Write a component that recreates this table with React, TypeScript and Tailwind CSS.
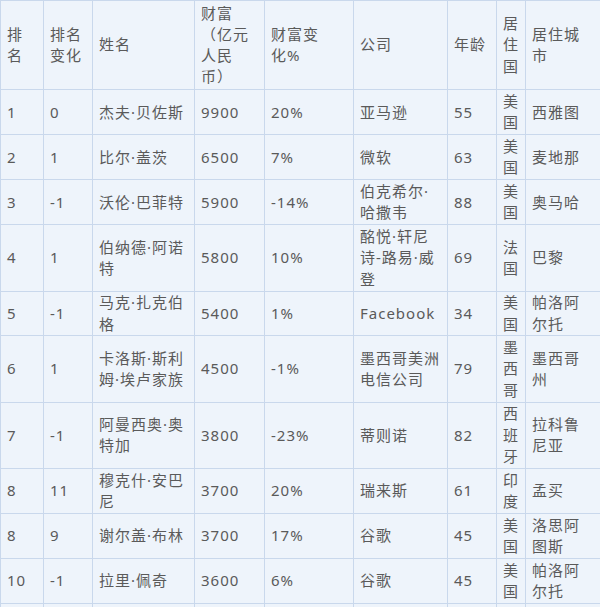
import React from "react";

const header = ["排名", "排名变化", "姓名", "财富（亿元人民币）", "财富变化%", "公司", "年龄", "居住国", "居住城市"];

const rows: string[][] = [
  ["1", "0", "杰夫·贝佐斯", "9900", "20%", "亚马逊", "55", "美国", "西雅图"],
  ["2", "1", "比尔·盖茨", "6500", "7%", "微软", "63", "美国", "麦地那"],
  ["3", "-1", "沃伦·巴菲特", "5900", "-14%", "伯克希尔·哈撒韦", "88", "美国", "奥马哈"],
  ["4", "1", "伯纳德·阿诺特", "5800", "10%", "酩悦·轩尼诗-路易·威登", "69", "法国", "巴黎"],
  ["5", "-1", "马克·扎克伯格", "5400", "1%", "Facebook", "34", "美国", "帕洛阿尔托"],
  ["6", "1", "卡洛斯·斯利姆·埃卢家族", "4500", "-1%", "墨西哥美洲电信公司", "79", "墨西哥", "墨西哥州"],
  ["7", "-1", "阿曼西奥·奥特加", "3800", "-23%", "蒂则诺", "82", "西班牙", "拉科鲁尼亚"],
  ["8", "11", "穆克什·安巴尼", "3700", "20%", "瑞来斯", "61", "印度", "孟买"],
  ["8", "9", "谢尔盖·布林", "3700", "17%", "谷歌", "45", "美国", "洛思阿图斯"],
  ["10", "-1", "拉里·佩奇", "3600", "6%", "谷歌", "45", "美国", "帕洛阿尔托"],
  ["\u00a0", "\u00a0", "\u00a0", "\u00a0", "\u00a0", "\u00a0", "\u00a0", "\u00a0", "\u00a0"],
];

function Cell({ text, last, head }: { text: string; last: boolean; head?: boolean }) {
  return (
    <div
      className={
        "flex items-center border-b border-r border-[#c9d8ec] pl-[6px] " +
        (last ? "pr-[16px] " : "pr-[6px] ") +
        (head ? "py-[1.5px]" : "py-[0.67px]")
      }
    >
      <span className="break-words">{text}</span>
    </div>
  );
}

export default function App() {
  return (
    <div className="w-[600px] h-[607px] overflow-hidden bg-[#eef4fb]">
      <div
        className="grid grid-cols-[43px_49px_102px_70px_89px_94px_49px_29px_80px] w-max border-l border-t border-[#c9d8ec] bg-[#eef4fb] text-[15px] leading-[21.33px] tracking-[1px] text-[#5a5a5a] [text-spacing-trim:space-all]"
        style={{ fontFamily: '"Noto Sans", "Noto Sans CJK SC", sans-serif' }}
      >
        {header.map((h, i) => (
          <Cell key={"h" + i} text={h} last={i === header.length - 1} head />
        ))}
        {rows.map((r, ri) =>
          r.map((c, ci) => <Cell key={ri + "-" + ci} text={c} last={ci === r.length - 1} />)
        )}
      </div>
    </div>
  );
}
